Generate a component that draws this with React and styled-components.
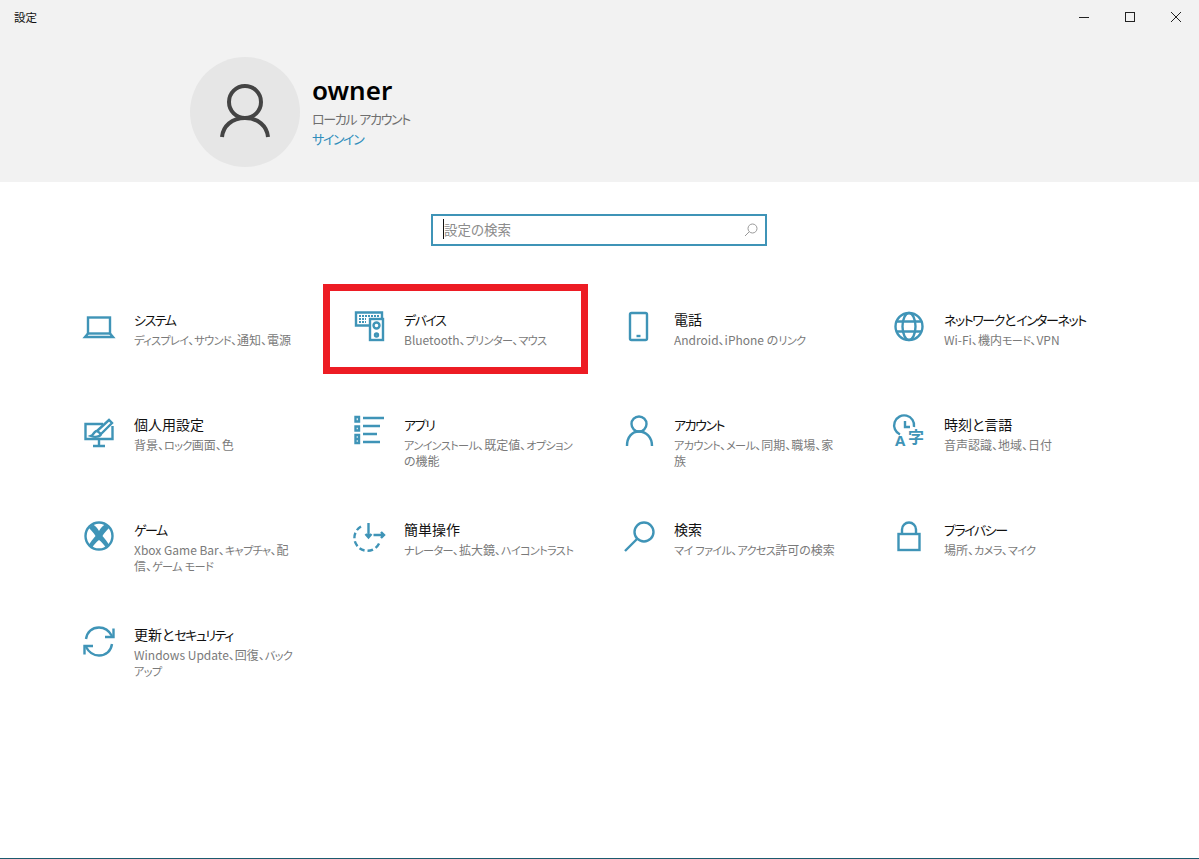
import React from "react"
import styled, { createGlobalStyle } from "styled-components"

const accent = "#3f94b7"

const GlobalStyle = createGlobalStyle`
  html, body {
    margin: 0;
    padding: 0;
    background: #fff;
    font-family: "Noto Sans CJK JP", "Noto Sans", sans-serif;
    font-feature-settings: "palt";
  }
`

const Page = styled.div`
  min-height: 100vh;
  box-sizing: border-box;
  display: flex;
  flex-direction: column;
  border-bottom: 1px solid #1d5a6e;
`

const Header = styled.header`
  height: 182px;
  background: #f2f2f2;
`

const TitleBar = styled.div`
  height: 34px;
  display: flex;
  justify-content: space-between;
  align-items: center;
`

const WindowTitle = styled.span`
  padding-left: 14px;
  font-size: 11.5px;
  color: #111;
`

const WindowControls = styled.div`
  display: flex;
`

const WindowButton = styled.div`
  width: 46px;
  height: 34px;
  display: flex;
  align-items: center;
  justify-content: center;
`

const Profile = styled.div`
  margin-top: 23px;
  padding-left: 190px;
  display: flex;
  gap: 12px;
`

const Avatar = styled.div`
  width: 110px;
  height: 110px;
  border-radius: 50%;
  background: #e6e6e6;
  display: flex;
  align-items: center;
  justify-content: center;
`

const ProfileText = styled.div`
  display: flex;
  flex-direction: column;
  padding-top: 14px;
`

const UserName = styled.div`
  font-family: "Noto Sans", sans-serif;
  font-size: 26px;
  font-weight: 600;
  line-height: 38px;
  color: #000;
`

const AccountType = styled.div`
  --kana-track: -1.4px;
  font-size: 14px;
  line-height: 21px;
  margin-top: -1px;
  color: #6f6f6f;
`

const SignIn = styled.div`
  --kana-track: -1.4px;
  font-size: 14px;
  line-height: 21px;
  margin-top: -1px;
  color: #2f8dbb;
`

const SearchRow = styled.div`
  margin-top: 32px;
  display: flex;
  justify-content: center;
`

const SearchBox = styled.div`
  width: 336px;
  height: 32px;
  margin-left: -1px;
  box-sizing: border-box;
  border: 2px solid ${accent};
  display: flex;
  align-items: center;
  justify-content: space-between;
  padding: 0 7px 0 10px;
`

const Placeholder = styled.span`
  font-size: 13.5px;
  color: #8c8c8c;
  border-left: 1px solid #111;
  line-height: 20px;
  margin-top: -3px;
`

const Grid = styled.main`
  margin-top: 64px;
  padding-left: 84px;
  display: grid;
  grid-template-columns: repeat(4, 270px);
  grid-auto-rows: 105px;
`

const Tile = styled.div`
  position: relative;
  display: flex;
  gap: 18px;
  ${p => p.$highlight && `
    &::after {
      content: "";
      position: absolute;
      left: -31px;
      top: -26px;
      width: 265px;
      height: 90px;
      box-sizing: border-box;
      border: 7px solid #ed1c24;
    }
  `}
`

const TileIcon = styled.svg`
  width: 32px;
  height: 32px;
  flex: none;
  fill: none;
  overflow: visible;
  stroke: ${accent};
  stroke-width: 2.4;
`

const TileText = styled.div`
  width: 172px;
`

const TileTitle = styled.div`
  --kana-track: -1.5px;
  margin-top: -1px;
  font-size: 14px;
  line-height: 20px;
  color: #111;
`

const TileDescription = styled.div`
  --kana-track: -0.65px;
  margin-top: 3px;
  font-size: 12px;
  line-height: 16px;
  white-space: pre;
  color: #7a7a7a;
`

// the kana of the original UI font are much narrower than its kanji
const KanaRun = styled.span`
  font-size: 0.93em;
  line-height: 1;
  letter-spacing: var(--kana-track);
`

const JaText = ({ children }) =>
  children.split(/([ァ-ヶー]+)/).map((part, index) =>
    index % 2 ? <KanaRun key={index}>{part}</KanaRun> : part
  )

const tiles = [
  {
    title: "システム",
    description: "ディスプレイ、サウンド、通知、電源",
    icon: (
      <>
        <rect x="4" y="7.5" width="22" height="16" />
        <path d="M4 23.5 L1 27 H29 L26 23.5" />
      </>
    ),
  },
  {
    title: "デバイス",
    description: "Bluetooth、プリンター、マウス",
    highlight: true,
    icon: (
      <>
        <path d="M15 15.5 H2 V2.5 H28 V8" />
        <path d="M5 6 H25 M5 9 H12 M5 12 H12" strokeWidth="1.8" strokeDasharray="2 1" />
        <rect x="16" y="9" width="13" height="21" />
        <circle cx="22.5" cy="15.5" r="3" />
        <circle cx="22.5" cy="25" r="1.5" />
      </>
    ),
  },
  {
    title: "電話",
    description: "Android、iPhone のリンク",
    icon: (
      <>
        <rect x="6" y="3" width="17" height="27" rx="1.5" />
        <path d="M12.5 26 H16.5" />
      </>
    ),
  },
  {
    title: "ネットワークとインターネット",
    description: "Wi-Fi、機内モード、VPN",
    icon: (
      <>
        <circle cx="15" cy="16.5" r="13.5" />
        <ellipse cx="15" cy="16.5" rx="6.5" ry="13.5" />
        <path d="M3 11.5 H27 M3 21.5 H27" />
      </>
    ),
  },
  {
    title: "個人用設定",
    description: "背景、ロック画面、色",
    icon: (
      <>
        <path d="M19 9 H1.5 V24 H28.5 V11" />
        <path d="M9 31 H21 M15 24 V31" />
        <path d="M13 16 L25 5 L28 8 L17 19 Z" />
        <path d="M12.5 16 C9 17 10 20 7 21 C11 22.5 16 22 17 19" />
      </>
    ),
  },
  {
    title: "アプリ",
    description: "アンインストール、既定値、オプション\nの機能",
    icon: (
      <>
        <path d="M1.5 2 H5 V6.5 H1.5 Z M1.5 11.5 H5 V15.5 H1.5 Z M1.5 20 H5 V24 H1.5 Z M1.5 24 H5 V28 H1.5 Z" />
        <path d="M9 3 H30 M9 11 H26 M9 19 H23 M9 27 H26" />
      </>
    ),
  },
  {
    title: "アカウント",
    description: "アカウント、メール、同期、職場、家\n族",
    icon: (
      <>
        <circle cx="15" cy="9" r="7.5" />
        <path d="M3 31 C3 22 8 16.5 15 16.5 C22 16.5 28 22 28 31" />
      </>
    ),
  },
  {
    title: "時刻と言語",
    description: "音声認識、地域、日付",
    icon: (
      <>
        <path d="M6 19.5 A10 10 0 1 1 20 12" />
        <path d="M11 6 V12 H16" />
        <text x="1" y="31" fontFamily="Noto Sans, sans-serif" fontSize="15" fontWeight="700" fill={accent} stroke="none">A</text>
        <text x="14" y="28" fontFamily="Noto Sans CJK JP, sans-serif" fontSize="16" fontWeight="700" fill={accent} stroke="none">字</text>
      </>
    ),
  },
  {
    title: "ゲーム",
    description: "Xbox Game Bar、キャプチャ、配\n信、ゲーム モード",
    icon: (
      <>
        <circle cx="15" cy="16" r="13.5" />
        <path d="M5 8 L9 4.5 C11.5 6 13.5 8 15 11 C16.5 8 18.5 6 21 4.5 L25 8 C22 11 20 13.5 18.5 16 C21 19 23.5 22 25.5 25.5 L22 28 C20 24.5 17.5 22 15 20 C12.5 22 10 24.5 8 28 L4.5 25.5 C6.5 22 9 19 11.5 16 C10 13.5 8 11 5 8 Z" fill={accent} stroke="none" />
      </>
    ),
  },
  {
    title: "簡単操作",
    description: "ナレーター、拡大鏡、ハイコントラスト",
    icon: (
      <>
        <path d="M7 6.5 A13 13 0 1 0 26 21" strokeDasharray="5.5 3" />
        <path d="M14.5 3 V17 M11.5 14 L14.5 17.5 L17.5 14" />
        <path d="M19.5 15 H30 M27 12 L30 15 L27 18" />
      </>
    ),
  },
  {
    title: "検索",
    description: "マイ ファイル、アクセス許可の検索",
    icon: (
      <>
        <circle cx="20" cy="12" r="9.5" />
        <path d="M13 19 L1 31" />
      </>
    ),
  },
  {
    title: "プライバシー",
    description: "場所、カメラ、マイク",
    icon: (
      <>
        <rect x="4.5" y="14" width="21" height="16" />
        <path d="M8 14 V9.5 A7 7 0 0 1 22 9.5 V14" />
      </>
    ),
  },
  {
    title: "更新とセキュリティ",
    description: "Windows Update、回復、バック\nアップ",
    icon: (
      <>
        <path d="M2 14 C3 7 8 2.5 15 2.5 C21 2.5 25 5.5 28 11" />
        <path d="M29.5 3.5 V12 H21" />
        <path d="M28 19 C27 26 22 30.5 15 30.5 C9 30.5 5 27.5 2 22" />
        <path d="M0.5 29.5 V21 H9" />
      </>
    ),
  },
]

const App = () => {
  return (
    <Page>
      <GlobalStyle />
      <Header>
        <TitleBar>
          <WindowTitle>設定</WindowTitle>
          <WindowControls>
            <WindowButton>
              <svg width="10" height="10" viewBox="0 0 10 10"><path d="M0 5.5 H10" stroke="#222" /></svg>
            </WindowButton>
            <WindowButton>
              <svg width="10" height="10" viewBox="0 0 10 10"><rect x="0.5" y="0.5" width="9" height="9" fill="none" stroke="#222" /></svg>
            </WindowButton>
            <WindowButton>
              <svg width="10" height="10" viewBox="0 0 10 10"><path d="M0 0 L10 10 M10 0 L0 10" stroke="#222" /></svg>
            </WindowButton>
          </WindowControls>
        </TitleBar>
        <Profile>
          <Avatar>
            <svg width="52" height="60" viewBox="0 0 52 60" fill="none" stroke="#444" strokeWidth="4">
              <circle cx="26" cy="20" r="16" />
              <path d="M3 55 C4 44 13 36 26 36 C39 36 48 44 49 55" />
            </svg>
          </Avatar>
          <ProfileText>
            <UserName>owner</UserName>
            <AccountType><JaText>ローカル アカウント</JaText></AccountType>
            <SignIn><JaText>サインイン</JaText></SignIn>
          </ProfileText>
        </Profile>
      </Header>
      <SearchRow>
        <SearchBox>
          <Placeholder>設定の検索</Placeholder>
          <svg width="14" height="14" viewBox="0 0 14 14" fill="none" stroke="#999">
            <circle cx="8.5" cy="5.5" r="4.5" />
            <path d="M5.2 8.8 L1 13" />
          </svg>
        </SearchBox>
      </SearchRow>
      <Grid>
        {tiles.map(tile => (
          <Tile key={tile.title} $highlight={tile.highlight}>
            <TileIcon viewBox="0 0 32 32">{tile.icon}</TileIcon>
            <TileText>
              <TileTitle><JaText>{tile.title}</JaText></TileTitle>
              <TileDescription><JaText>{tile.description}</JaText></TileDescription>
            </TileText>
          </Tile>
        ))}
      </Grid>
    </Page>
  )
}

export default App
